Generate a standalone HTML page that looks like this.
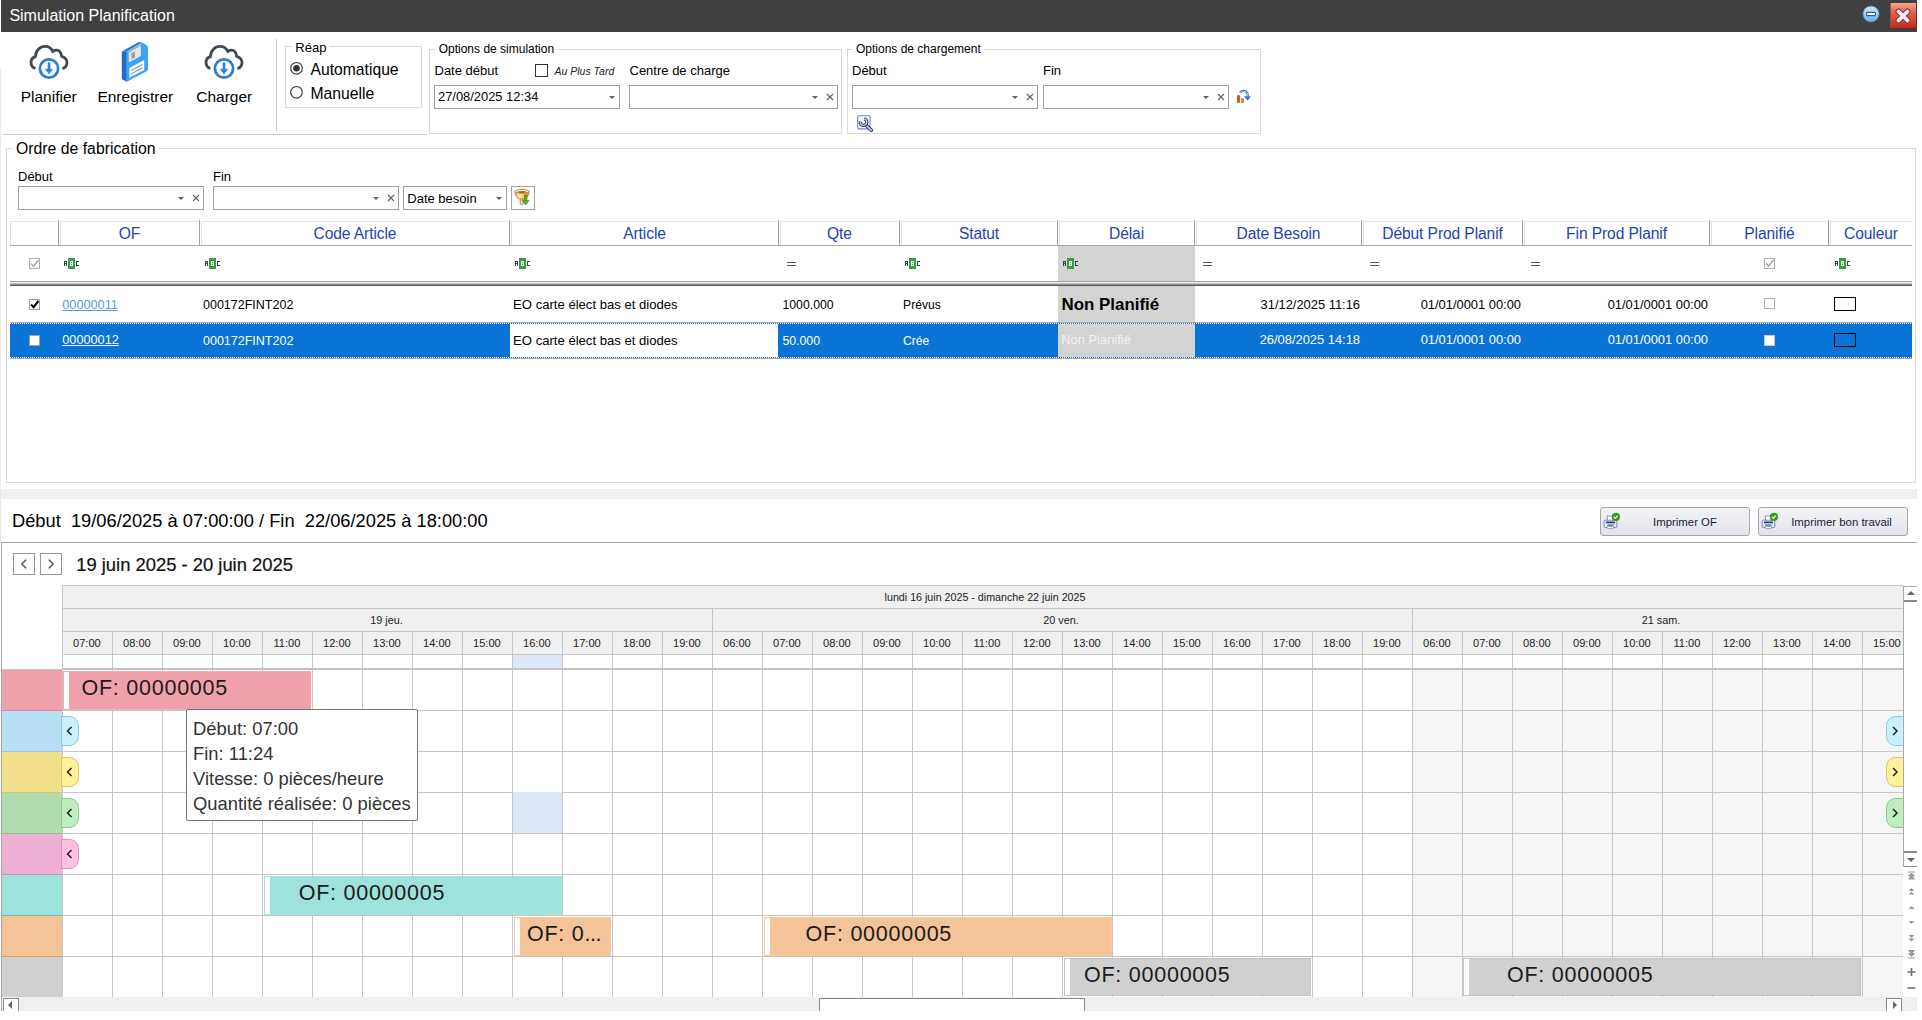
<!DOCTYPE html><html><head><meta charset="utf-8"><style>
*{box-sizing:border-box;margin:0;padding:0}
html,body{width:1922px;height:1020px;overflow:hidden;background:#fff;font-family:"Liberation Sans",sans-serif;color:#000}
.ab{position:absolute}
.t{position:absolute;white-space:nowrap;line-height:1}
</style></head><body>

<div class="ab" style="left:1px;top:0px;width:1916px;height:32px;background:#404040"></div>
<div class="t" style="left:9.40px;top:8.10px;font-size:16px;color:#fff;font-weight:normal;font-style:normal;">Simulation Planification</div>
<svg class="ab" style="left:1862px;top:5px" width="18" height="18" viewBox="0 0 18 18">
<defs><linearGradient id="mg" x1="0" y1="0" x2="0" y2="1"><stop offset="0" stop-color="#C8E8F8"/><stop offset="0.45" stop-color="#A8D4F0"/><stop offset="1" stop-color="#6AA8E0"/></linearGradient></defs>
<circle cx="9" cy="9" r="8.1" fill="url(#mg)" stroke="#3F78C8" stroke-width="0.8"/>
<rect x="4.6" y="7.3" width="8.8" height="3.4" rx="0.8" fill="#fff" stroke="#2F5BA8" stroke-width="1.2"/></svg>
<svg class="ab" style="left:1890px;top:3px" width="26" height="25" viewBox="0 0 26 25">
<defs><linearGradient id="cg" x1="0" y1="0" x2="0" y2="1"><stop offset="0" stop-color="#F4A894"/><stop offset="0.35" stop-color="#E0684E"/><stop offset="1" stop-color="#C02A1C"/></linearGradient></defs>
<rect x="0" y="0" width="26" height="25" fill="url(#cg)"/>
<rect x="0" y="0" width="1" height="25" fill="#B04040"/>
<path d="M8.5 8.5 L17.5 17.5 M17.5 8.5 L8.5 17.5" stroke="#A8302A" stroke-width="6" stroke-linecap="round"/>
<path d="M8.5 8.5 L17.5 17.5 M17.5 8.5 L8.5 17.5" stroke="#E6EEF8" stroke-width="3.8" stroke-linecap="round"/></svg>
<svg class="ab" style="left:27px;top:42px" width="44" height="40" viewBox="0 0 44 40">
<path d="M8.4 26.5 C5.5 25.5 4 23 4 20.5 C4 17.5 6 15.3 8.4 14.6 C8.7 8.5 13 4.4 18.1 4.4 C21.5 4.4 24.3 6.3 25.9 9.4 C27 8.6 28.3 8.2 29.5 8.2 C32.3 8.2 34.3 10.8 34.6 14.2 C37.5 15.2 40 17.5 40 20.6 C40 23.5 38 26 35.4 26.7" fill="none" stroke="#3C4A58" stroke-width="2.8"/>
<circle cx="22" cy="26.5" r="9.1" fill="#fff" stroke="#2A7FD0" stroke-width="2.7"/>
<path d="M22 21.5 L22 28" stroke="#2A7FD0" stroke-width="2.6" stroke-linecap="round"/>
<path d="M18.4 27.2 L25.6 27.2 L22 31.8 Z" fill="#2A7FD0" stroke="#2A7FD0" stroke-width="0.6" stroke-linejoin="round"/>
</svg>
<svg class="ab" style="left:202px;top:42px" width="44" height="40" viewBox="0 0 44 40">
<path d="M8.4 26.5 C5.5 25.5 4 23 4 20.5 C4 17.5 6 15.3 8.4 14.6 C8.7 8.5 13 4.4 18.1 4.4 C21.5 4.4 24.3 6.3 25.9 9.4 C27 8.6 28.3 8.2 29.5 8.2 C32.3 8.2 34.3 10.8 34.6 14.2 C37.5 15.2 40 17.5 40 20.6 C40 23.5 38 26 35.4 26.7" fill="none" stroke="#3C4A58" stroke-width="2.8"/>
<circle cx="22" cy="26.5" r="9.1" fill="#fff" stroke="#2A7FD0" stroke-width="2.7"/>
<path d="M22 21.5 L22 28" stroke="#2A7FD0" stroke-width="2.6" stroke-linecap="round"/>
<path d="M18.4 27.2 L25.6 27.2 L22 31.8 Z" fill="#2A7FD0" stroke="#2A7FD0" stroke-width="0.6" stroke-linejoin="round"/>
</svg>
<svg class="ab" style="left:120px;top:41px" width="30" height="42" viewBox="120 41 30 42">
<path d="M121.8 52 Q122.5 50 125 50.3 L126.8 51.5 L126.8 81.7 L122.6 79.6 Q121.8 79 121.8 78 Z" fill="#1C6CC8"/>
<path d="M121.6 51.9 L139 42.2 Q140.5 41.6 142 42.4 L146.5 45 Q148 46 148 47.5 L148 69 Q148 70.5 146.8 71.2 L126.8 81.7 L126.8 51.5 Z" fill="#3BA4F6"/>
<path d="M124 50.2 L138.5 42.2 Q139.8 41.6 141 42.3 L127 50.8 Z" fill="#1F72CC"/>
<path d="M128.7 50.7 L140.9 43.3 L140.9 55.9 L129.8 62 Q128.7 62.3 128.7 61.3 Z" fill="#E6E6E6"/>
<path d="M128.7 50.7 L140.9 43.3 L140.9 45.5 L128.7 52.9 Z" fill="#A8AEB0"/>
<path d="M131.5 53.3 L135 51.3 L135 57.2 L131.5 59.2 Z" fill="#9AA0A2"/>
<path d="M129.4 68.1 L144.2 60.1 L144.2 70 L129.4 77.8 Z" fill="#FAFCFE"/>
<path d="M131 70.8 L142.6 64.6 M131 74 L142.6 67.8" stroke="#8E9EA4" stroke-width="1.1"/>
</svg>
<div class="t" style="left:-351.30px;width:800px;text-align:center;top:89.23px;font-size:15.5px;color:#000;font-weight:normal;font-style:normal;">Planifier</div>
<div class="t" style="left:-264.70px;width:800px;text-align:center;top:89.23px;font-size:15.5px;color:#000;font-weight:normal;font-style:normal;">Enregistrer</div>
<div class="t" style="left:-175.80px;width:800px;text-align:center;top:89.23px;font-size:15.5px;color:#000;font-weight:normal;font-style:normal;">Charger</div>
<div class="ab" style="left:276px;top:39px;width:1px;height:92px;background:#C8C8C8"></div>
<div class="ab" style="left:2px;top:134px;width:425px;height:1px;background:#D0D0D0"></div>
<div class="ab" style="left:0px;top:68px;width:1px;height:474px;background:#EAEAEA"></div>
<div class="ab" style="left:285px;top:46px;width:137px;height:62px;border:1px solid #DADADA"></div>
<div class="t" style="left:292.3px;top:41.15px;font-size:13px;padding:0 3px;background:#fff">Réap</div>
<svg class="ab" style="left:289px;top:61px" width="16" height="40" viewBox="0 0 16 40">
<circle cx="7.5" cy="7.3" r="5.8" fill="#fff" stroke="#333" stroke-width="1.1"/>
<circle cx="7.5" cy="7.3" r="3.3" fill="#333"/>
<circle cx="7.5" cy="31.3" r="5.8" fill="#fff" stroke="#333" stroke-width="1.1"/>
</svg>
<div class="t" style="left:310.50px;top:61.85px;font-size:15.7px;color:#000;font-weight:normal;font-style:normal;">Automatique</div>
<div class="t" style="left:310.50px;top:85.76px;font-size:15.7px;color:#000;font-weight:normal;font-style:normal;">Manuelle</div>
<div class="ab" style="left:429px;top:49px;width:413px;height:85px;border:1px solid #DADADA"></div>
<div class="t" style="left:435.7px;top:42.80px;font-size:12px;padding:0 3px;background:#fff">Options de simulation</div>
<div class="t" style="left:434.50px;top:64.35px;font-size:13px;color:#000;font-weight:normal;font-style:normal;">Date début</div>
<div class="ab" style="left:535px;top:64px;width:13px;height:13px;border:1px solid #333;background:#fff"></div>
<div class="t" style="left:554.50px;top:66.48px;font-size:10.5px;color:#222;font-weight:normal;font-style:italic;">Au Plus Tard</div>
<div class="t" style="left:629.50px;top:64.35px;font-size:13px;color:#000;font-weight:normal;font-style:normal;">Centre de charge</div>
<div class="ab" style="left:434px;top:85px;width:186px;height:24px;border:1px solid #A0A0A0;background:#fff"></div>
<div class="t" style="left:438.00px;top:91.44px;font-size:12.9px;color:#000;font-weight:normal;font-style:normal;">27/08/2025 12:34</div>
<div class="ab" style="left:609px;top:96px;width:0;height:0;border-left:3px solid transparent;border-right:3px solid transparent;border-top:3px solid #606060"></div>
<div class="ab" style="left:629px;top:85px;width:209px;height:24px;border:1px solid #A0A0A0;background:#fff"></div>
<div class="ab" style="left:812px;top:96px;width:0;height:0;border-left:3px solid transparent;border-right:3px solid transparent;border-top:3px solid #606060"></div>
<svg class="ab" style="left:826px;top:93px" width="8" height="8" viewBox="0 0 8 8"><path d="M1 1 L7 7 M7 1 L1 7" stroke="#606060" stroke-width="1.1"/></svg>
<svg class="ab" style="left:854px;top:112px" width="22" height="22" viewBox="0 0 22 22">
<rect x="3.7" y="3.7" width="12.3" height="13.2" rx="1" fill="#F6F8FC" stroke="#7088C8" stroke-width="1.1"/>
<path d="M12 13 L17.3 18.3" stroke="#2A3560" stroke-width="3.6" stroke-linecap="round"/>
<path d="M12 13 L17.3 18.3" stroke="#BCD0EE" stroke-width="1.7" stroke-linecap="round"/>
<path d="M10.07 6.85 A3.3 3.3 0 1 1 6.25 9.53" fill="none" stroke="#2A3560" stroke-width="3.2"/>
<path d="M10.07 6.85 A3.3 3.3 0 1 1 6.25 9.53" fill="none" stroke="#C4D4F0" stroke-width="1.4"/>
</svg>
<div class="ab" style="left:847px;top:49px;width:414px;height:85px;border:1px solid #DADADA"></div>
<div class="t" style="left:853px;top:42.80px;font-size:12px;padding:0 3px;background:#fff">Options de chargement</div>
<div class="t" style="left:852.00px;top:64.35px;font-size:13px;color:#000;font-weight:normal;font-style:normal;">Début</div>
<div class="t" style="left:1043.00px;top:64.35px;font-size:13px;color:#000;font-weight:normal;font-style:normal;">Fin</div>
<div class="ab" style="left:852px;top:85px;width:186px;height:24px;border:1px solid #A0A0A0;background:#fff"></div>
<div class="ab" style="left:1012px;top:96px;width:0;height:0;border-left:3px solid transparent;border-right:3px solid transparent;border-top:3px solid #606060"></div>
<svg class="ab" style="left:1026px;top:93px" width="8" height="8" viewBox="0 0 8 8"><path d="M1 1 L7 7 M7 1 L1 7" stroke="#606060" stroke-width="1.1"/></svg>
<div class="ab" style="left:1043px;top:85px;width:186px;height:24px;border:1px solid #A0A0A0;background:#fff"></div>
<div class="ab" style="left:1203px;top:96px;width:0;height:0;border-left:3px solid transparent;border-right:3px solid transparent;border-top:3px solid #606060"></div>
<svg class="ab" style="left:1217px;top:93px" width="8" height="8" viewBox="0 0 8 8"><path d="M1 1 L7 7 M7 1 L1 7" stroke="#606060" stroke-width="1.1"/></svg>
<svg class="ab" style="left:1236px;top:89px" width="17" height="15" viewBox="1236 89 17 15">
<rect x="1237.1" y="95" width="2.8" height="8" rx="1.2" fill="#D84828"/>
<rect x="1241" y="98" width="3" height="5" rx="1.2" fill="#E08A30"/>
<path d="M1240 92.6 Q1243 89.6 1246.5 92 Q1248 93.5 1247.6 97" fill="none" stroke="#2F6CC0" stroke-width="2.2"/>
<path d="M1240 92.6 Q1243 89.6 1246.5 92 Q1248 93.5 1247.6 97" fill="none" stroke="#BEE4FA" stroke-width="0.8"/>
<path d="M1244 96.3 L1251 96.3 L1247.6 100.8 Z" fill="#3A7CCC"/>
</svg>
<div class="ab" style="left:6px;top:148px;width:1910px;height:335px;border:1px solid #DADADA"></div>
<div class="t" style="left:13px;top:140.57px;font-size:15.8px;padding:0 3px;background:#fff">Ordre de fabrication</div>
<div class="t" style="left:18.00px;top:170.35px;font-size:13px;color:#000;font-weight:normal;font-style:normal;">Début</div>
<div class="t" style="left:213.00px;top:170.35px;font-size:13px;color:#000;font-weight:normal;font-style:normal;">Fin</div>
<div class="ab" style="left:18px;top:186px;width:186px;height:24px;border:1px solid #A0A0A0;background:#fff"></div>
<div class="ab" style="left:178px;top:197px;width:0;height:0;border-left:3px solid transparent;border-right:3px solid transparent;border-top:3px solid #606060"></div>
<svg class="ab" style="left:192px;top:194px" width="8" height="8" viewBox="0 0 8 8"><path d="M1 1 L7 7 M7 1 L1 7" stroke="#606060" stroke-width="1.1"/></svg>
<div class="ab" style="left:213px;top:186px;width:186px;height:24px;border:1px solid #A0A0A0;background:#fff"></div>
<div class="ab" style="left:373px;top:197px;width:0;height:0;border-left:3px solid transparent;border-right:3px solid transparent;border-top:3px solid #606060"></div>
<svg class="ab" style="left:387px;top:194px" width="8" height="8" viewBox="0 0 8 8"><path d="M1 1 L7 7 M7 1 L1 7" stroke="#606060" stroke-width="1.1"/></svg>
<div class="ab" style="left:403px;top:186px;width:104px;height:24px;border:1px solid #A0A0A0;background:#fff"></div>
<div class="t" style="left:407.30px;top:192.15px;font-size:13px;color:#000;font-weight:normal;font-style:normal;">Date besoin</div>
<div class="ab" style="left:496px;top:197px;width:0;height:0;border-left:3px solid transparent;border-right:3px solid transparent;border-top:3px solid #606060"></div>
<div class="ab" style="left:511px;top:186px;width:24px;height:24px;border:1px solid #A0A0A0;background:#fff"></div>
<svg class="ab" style="left:511px;top:186px" width="24" height="24" viewBox="0 0 24 24">
<defs><linearGradient id="fg" x1="0" y1="0" x2="1" y2="0"><stop offset="0" stop-color="#E8A040"/><stop offset="0.3" stop-color="#FFF0C8"/><stop offset="0.7" stop-color="#F0C040"/><stop offset="1" stop-color="#D08020"/></linearGradient></defs>
<path d="M4 5.5 Q4.3 11.8 9 13.3 L13 13.3 Q17.7 11.8 18 5.5 Z" fill="url(#fg)" stroke="#C87428" stroke-width="0.9"/>
<ellipse cx="11" cy="5.4" rx="7" ry="2" fill="#FFF4E0" stroke="#C87428" stroke-width="0.9"/>
<ellipse cx="11" cy="5.9" rx="4.5" ry="1" fill="#C0602A"/>
<rect x="9.2" y="12.8" width="3" height="5.8" rx="1.3" fill="#FFE8C0" stroke="#C06420" stroke-width="0.9"/>
<rect x="13.2" y="9" width="2.8" height="6.5" fill="#58A828" stroke="#3E8A18" stroke-width="0.6"/>
<path d="M11.2 14.6 L17.9 14.6 L14.6 18.9 Z" fill="#68B030" stroke="#3E8A18" stroke-width="0.7" stroke-linejoin="round"/>
</svg>
<div class="ab" style="left:10px;top:221px;width:1902px;height:25px;background:#fff;border-top:1px solid #E2E2E2;border-bottom:1px solid #A8A8A8"></div>
<div class="ab" style="left:58px;top:220px;width:1px;height:25px;background:#A0A0A0"></div>
<div class="ab" style="left:57px;top:221px;width:1px;height:1px;background:#fff"></div>
<div class="ab" style="left:59px;top:221px;width:1px;height:1px;background:#fff"></div>
<div class="ab" style="left:60px;top:222px;width:1px;height:23px;background:#E0E0E0"></div>
<div class="ab" style="left:199px;top:220px;width:1px;height:25px;background:#A0A0A0"></div>
<div class="ab" style="left:198px;top:221px;width:1px;height:1px;background:#fff"></div>
<div class="ab" style="left:200px;top:221px;width:1px;height:1px;background:#fff"></div>
<div class="ab" style="left:201px;top:222px;width:1px;height:23px;background:#E0E0E0"></div>
<div class="ab" style="left:509px;top:220px;width:1px;height:25px;background:#A0A0A0"></div>
<div class="ab" style="left:508px;top:221px;width:1px;height:1px;background:#fff"></div>
<div class="ab" style="left:510px;top:221px;width:1px;height:1px;background:#fff"></div>
<div class="ab" style="left:511px;top:222px;width:1px;height:23px;background:#E0E0E0"></div>
<div class="ab" style="left:778px;top:220px;width:1px;height:25px;background:#A0A0A0"></div>
<div class="ab" style="left:777px;top:221px;width:1px;height:1px;background:#fff"></div>
<div class="ab" style="left:779px;top:221px;width:1px;height:1px;background:#fff"></div>
<div class="ab" style="left:780px;top:222px;width:1px;height:23px;background:#E0E0E0"></div>
<div class="ab" style="left:899px;top:220px;width:1px;height:25px;background:#A0A0A0"></div>
<div class="ab" style="left:898px;top:221px;width:1px;height:1px;background:#fff"></div>
<div class="ab" style="left:900px;top:221px;width:1px;height:1px;background:#fff"></div>
<div class="ab" style="left:901px;top:222px;width:1px;height:23px;background:#E0E0E0"></div>
<div class="ab" style="left:1057px;top:220px;width:1px;height:25px;background:#A0A0A0"></div>
<div class="ab" style="left:1056px;top:221px;width:1px;height:1px;background:#fff"></div>
<div class="ab" style="left:1058px;top:221px;width:1px;height:1px;background:#fff"></div>
<div class="ab" style="left:1059px;top:222px;width:1px;height:23px;background:#E0E0E0"></div>
<div class="ab" style="left:1194px;top:220px;width:1px;height:25px;background:#A0A0A0"></div>
<div class="ab" style="left:1193px;top:221px;width:1px;height:1px;background:#fff"></div>
<div class="ab" style="left:1195px;top:221px;width:1px;height:1px;background:#fff"></div>
<div class="ab" style="left:1196px;top:222px;width:1px;height:23px;background:#E0E0E0"></div>
<div class="ab" style="left:1361px;top:220px;width:1px;height:25px;background:#A0A0A0"></div>
<div class="ab" style="left:1360px;top:221px;width:1px;height:1px;background:#fff"></div>
<div class="ab" style="left:1362px;top:221px;width:1px;height:1px;background:#fff"></div>
<div class="ab" style="left:1363px;top:222px;width:1px;height:23px;background:#E0E0E0"></div>
<div class="ab" style="left:1522px;top:220px;width:1px;height:25px;background:#A0A0A0"></div>
<div class="ab" style="left:1521px;top:221px;width:1px;height:1px;background:#fff"></div>
<div class="ab" style="left:1523px;top:221px;width:1px;height:1px;background:#fff"></div>
<div class="ab" style="left:1524px;top:222px;width:1px;height:23px;background:#E0E0E0"></div>
<div class="ab" style="left:1709px;top:220px;width:1px;height:25px;background:#A0A0A0"></div>
<div class="ab" style="left:1708px;top:221px;width:1px;height:1px;background:#fff"></div>
<div class="ab" style="left:1710px;top:221px;width:1px;height:1px;background:#fff"></div>
<div class="ab" style="left:1711px;top:222px;width:1px;height:23px;background:#E0E0E0"></div>
<div class="ab" style="left:1828px;top:220px;width:1px;height:25px;background:#A0A0A0"></div>
<div class="ab" style="left:1827px;top:221px;width:1px;height:1px;background:#fff"></div>
<div class="ab" style="left:1829px;top:221px;width:1px;height:1px;background:#fff"></div>
<div class="ab" style="left:1830px;top:222px;width:1px;height:23px;background:#E0E0E0"></div>
<div class="ab" style="left:10px;top:221px;width:1px;height:24px;background:#E2E2E2"></div>
<div class="t" style="left:-270.50px;width:800px;text-align:center;top:226.04px;font-size:15.6px;color:#2444B2;font-weight:normal;font-style:normal;letter-spacing:-0.1px">OF</div>
<div class="t" style="left:-45.00px;width:800px;text-align:center;top:226.04px;font-size:15.6px;color:#2444B2;font-weight:normal;font-style:normal;letter-spacing:-0.1px">Code Article</div>
<div class="t" style="left:244.50px;width:800px;text-align:center;top:226.04px;font-size:15.6px;color:#2444B2;font-weight:normal;font-style:normal;letter-spacing:-0.1px">Article</div>
<div class="t" style="left:439.50px;width:800px;text-align:center;top:226.04px;font-size:15.6px;color:#2444B2;font-weight:normal;font-style:normal;letter-spacing:-0.1px">Qte</div>
<div class="t" style="left:579.00px;width:800px;text-align:center;top:226.04px;font-size:15.6px;color:#2444B2;font-weight:normal;font-style:normal;letter-spacing:-0.1px">Statut</div>
<div class="t" style="left:726.50px;width:800px;text-align:center;top:226.04px;font-size:15.6px;color:#2444B2;font-weight:normal;font-style:normal;letter-spacing:-0.1px">Délai</div>
<div class="t" style="left:878.50px;width:800px;text-align:center;top:226.04px;font-size:15.6px;color:#2444B2;font-weight:normal;font-style:normal;letter-spacing:-0.1px">Date Besoin</div>
<div class="t" style="left:1042.50px;width:800px;text-align:center;top:226.04px;font-size:15.6px;color:#2444B2;font-weight:normal;font-style:normal;letter-spacing:-0.1px">Début Prod Planif</div>
<div class="t" style="left:1216.50px;width:800px;text-align:center;top:226.04px;font-size:15.6px;color:#2444B2;font-weight:normal;font-style:normal;letter-spacing:-0.1px">Fin Prod Planif</div>
<div class="t" style="left:1369.50px;width:800px;text-align:center;top:226.04px;font-size:15.6px;color:#2444B2;font-weight:normal;font-style:normal;letter-spacing:-0.1px">Planifié</div>
<div class="t" style="left:1471.00px;width:800px;text-align:center;top:226.04px;font-size:15.6px;color:#2444B2;font-weight:normal;font-style:normal;letter-spacing:-0.1px">Couleur</div>
<div class="ab" style="left:1058px;top:246px;width:137px;height:112px;background:#D3D3D3"></div>
<div class="ab" style="left:10px;top:281px;width:1902px;height:1px;background:#A0A0A0"></div>
<div class="ab" style="left:10px;top:282px;width:1902px;height:1px;background:#EEEEEE"></div>
<div class="ab" style="left:10px;top:283px;width:1902px;height:1px;background:#C4C4C4"></div>
<div class="ab" style="left:10px;top:284px;width:1902px;height:1px;background:#8C8C8C"></div>
<div class="ab" style="left:10px;top:285px;width:1902px;height:1px;background:#5C5C5C"></div>
<div class="ab" style="left:29px;top:258px;width:11px;height:11px;border:1px solid #B0B0B0;background:#fff"></div>
<svg class="ab" style="left:29px;top:258px" width="11" height="11" viewBox="0 0 11 11"><path d="M2 5.5 L4.5 8.2 L9.5 2" fill="none" stroke="#A0A0A0" stroke-width="1.3"/></svg>
<svg class="ab" style="left:64px;top:258px" width="16" height="11" viewBox="0 0 16 11" shape-rendering="crispEdges"><rect x="0" y="3" width="3" height="1" fill="#3A3E4A"/><rect x="0" y="4" width="1" height="1" fill="#3A3E4A"/><rect x="2" y="4" width="1" height="1" fill="#3A3E4A"/><rect x="0" y="5" width="3" height="1" fill="#3A3E4A"/><rect x="0" y="6" width="1" height="1" fill="#3A3E4A"/><rect x="2" y="6" width="1" height="1" fill="#3A3E4A"/><rect x="0" y="7" width="1" height="1" fill="#3A3E4A"/><rect x="2" y="7" width="1" height="1" fill="#3A3E4A"/><rect x="4" y="0" width="7" height="11" fill="#34A040"/><rect x="6" y="3" width="3" height="5" fill="#fff"/><rect x="7" y="4" width="1" height="1" fill="#34A040"/><rect x="7" y="6" width="1" height="1" fill="#34A040"/><rect x="12" y="3" width="3" height="1" fill="#3A3E4A"/><rect x="12" y="4" width="1" height="3" fill="#3A3E4A"/><rect x="12" y="7" width="3" height="1" fill="#3A3E4A"/></svg>
<svg class="ab" style="left:205px;top:258px" width="16" height="11" viewBox="0 0 16 11" shape-rendering="crispEdges"><rect x="0" y="3" width="3" height="1" fill="#3A3E4A"/><rect x="0" y="4" width="1" height="1" fill="#3A3E4A"/><rect x="2" y="4" width="1" height="1" fill="#3A3E4A"/><rect x="0" y="5" width="3" height="1" fill="#3A3E4A"/><rect x="0" y="6" width="1" height="1" fill="#3A3E4A"/><rect x="2" y="6" width="1" height="1" fill="#3A3E4A"/><rect x="0" y="7" width="1" height="1" fill="#3A3E4A"/><rect x="2" y="7" width="1" height="1" fill="#3A3E4A"/><rect x="4" y="0" width="7" height="11" fill="#34A040"/><rect x="6" y="3" width="3" height="5" fill="#fff"/><rect x="7" y="4" width="1" height="1" fill="#34A040"/><rect x="7" y="6" width="1" height="1" fill="#34A040"/><rect x="12" y="3" width="3" height="1" fill="#3A3E4A"/><rect x="12" y="4" width="1" height="3" fill="#3A3E4A"/><rect x="12" y="7" width="3" height="1" fill="#3A3E4A"/></svg>
<svg class="ab" style="left:515px;top:258px" width="16" height="11" viewBox="0 0 16 11" shape-rendering="crispEdges"><rect x="0" y="3" width="3" height="1" fill="#3A3E4A"/><rect x="0" y="4" width="1" height="1" fill="#3A3E4A"/><rect x="2" y="4" width="1" height="1" fill="#3A3E4A"/><rect x="0" y="5" width="3" height="1" fill="#3A3E4A"/><rect x="0" y="6" width="1" height="1" fill="#3A3E4A"/><rect x="2" y="6" width="1" height="1" fill="#3A3E4A"/><rect x="0" y="7" width="1" height="1" fill="#3A3E4A"/><rect x="2" y="7" width="1" height="1" fill="#3A3E4A"/><rect x="4" y="0" width="7" height="11" fill="#34A040"/><rect x="6" y="3" width="3" height="5" fill="#fff"/><rect x="7" y="4" width="1" height="1" fill="#34A040"/><rect x="7" y="6" width="1" height="1" fill="#34A040"/><rect x="12" y="3" width="3" height="1" fill="#3A3E4A"/><rect x="12" y="4" width="1" height="3" fill="#3A3E4A"/><rect x="12" y="7" width="3" height="1" fill="#3A3E4A"/></svg>
<div class="ab" style="left:787px;top:262px;width:9px;height:1px;background:#555"></div>
<div class="ab" style="left:787px;top:265px;width:9px;height:1px;background:#555"></div>
<svg class="ab" style="left:905px;top:258px" width="16" height="11" viewBox="0 0 16 11" shape-rendering="crispEdges"><rect x="0" y="3" width="3" height="1" fill="#3A3E4A"/><rect x="0" y="4" width="1" height="1" fill="#3A3E4A"/><rect x="2" y="4" width="1" height="1" fill="#3A3E4A"/><rect x="0" y="5" width="3" height="1" fill="#3A3E4A"/><rect x="0" y="6" width="1" height="1" fill="#3A3E4A"/><rect x="2" y="6" width="1" height="1" fill="#3A3E4A"/><rect x="0" y="7" width="1" height="1" fill="#3A3E4A"/><rect x="2" y="7" width="1" height="1" fill="#3A3E4A"/><rect x="4" y="0" width="7" height="11" fill="#34A040"/><rect x="6" y="3" width="3" height="5" fill="#fff"/><rect x="7" y="4" width="1" height="1" fill="#34A040"/><rect x="7" y="6" width="1" height="1" fill="#34A040"/><rect x="12" y="3" width="3" height="1" fill="#3A3E4A"/><rect x="12" y="4" width="1" height="3" fill="#3A3E4A"/><rect x="12" y="7" width="3" height="1" fill="#3A3E4A"/></svg>
<svg class="ab" style="left:1063px;top:258px" width="16" height="11" viewBox="0 0 16 11" shape-rendering="crispEdges"><rect x="0" y="3" width="3" height="1" fill="#3A3E4A"/><rect x="0" y="4" width="1" height="1" fill="#3A3E4A"/><rect x="2" y="4" width="1" height="1" fill="#3A3E4A"/><rect x="0" y="5" width="3" height="1" fill="#3A3E4A"/><rect x="0" y="6" width="1" height="1" fill="#3A3E4A"/><rect x="2" y="6" width="1" height="1" fill="#3A3E4A"/><rect x="0" y="7" width="1" height="1" fill="#3A3E4A"/><rect x="2" y="7" width="1" height="1" fill="#3A3E4A"/><rect x="4" y="0" width="7" height="11" fill="#34A040"/><rect x="6" y="3" width="3" height="5" fill="#fff"/><rect x="7" y="4" width="1" height="1" fill="#34A040"/><rect x="7" y="6" width="1" height="1" fill="#34A040"/><rect x="12" y="3" width="3" height="1" fill="#3A3E4A"/><rect x="12" y="4" width="1" height="3" fill="#3A3E4A"/><rect x="12" y="7" width="3" height="1" fill="#3A3E4A"/></svg>
<div class="ab" style="left:1203px;top:262px;width:9px;height:1px;background:#555"></div>
<div class="ab" style="left:1203px;top:265px;width:9px;height:1px;background:#555"></div>
<div class="ab" style="left:1370px;top:262px;width:9px;height:1px;background:#555"></div>
<div class="ab" style="left:1370px;top:265px;width:9px;height:1px;background:#555"></div>
<div class="ab" style="left:1531px;top:262px;width:9px;height:1px;background:#555"></div>
<div class="ab" style="left:1531px;top:265px;width:9px;height:1px;background:#555"></div>
<div class="ab" style="left:1764px;top:258px;width:11px;height:11px;border:1px solid #B0B0B0;background:#fff"></div>
<svg class="ab" style="left:1764px;top:258px" width="11" height="11" viewBox="0 0 11 11"><path d="M2 5.5 L4.5 8.2 L9.5 2" fill="none" stroke="#A0A0A0" stroke-width="1.3"/></svg>
<svg class="ab" style="left:1835px;top:258px" width="16" height="11" viewBox="0 0 16 11" shape-rendering="crispEdges"><rect x="0" y="3" width="3" height="1" fill="#3A3E4A"/><rect x="0" y="4" width="1" height="1" fill="#3A3E4A"/><rect x="2" y="4" width="1" height="1" fill="#3A3E4A"/><rect x="0" y="5" width="3" height="1" fill="#3A3E4A"/><rect x="0" y="6" width="1" height="1" fill="#3A3E4A"/><rect x="2" y="6" width="1" height="1" fill="#3A3E4A"/><rect x="0" y="7" width="1" height="1" fill="#3A3E4A"/><rect x="2" y="7" width="1" height="1" fill="#3A3E4A"/><rect x="4" y="0" width="7" height="11" fill="#34A040"/><rect x="6" y="3" width="3" height="5" fill="#fff"/><rect x="7" y="4" width="1" height="1" fill="#34A040"/><rect x="7" y="6" width="1" height="1" fill="#34A040"/><rect x="12" y="3" width="3" height="1" fill="#3A3E4A"/><rect x="12" y="4" width="1" height="3" fill="#3A3E4A"/><rect x="12" y="7" width="3" height="1" fill="#3A3E4A"/></svg>
<div class="ab" style="left:29px;top:299px;width:11px;height:11px;border:1px solid #A0A0A0;background:#fff"></div>
<svg class="ab" style="left:29px;top:299px" width="11" height="11" viewBox="0 0 11 11"><path d="M2 5.5 L4.5 8.2 L9.5 2" fill="none" stroke="#000" stroke-width="2"/></svg>
<div class="t" style="left:62.30px;top:298.80px;font-size:12.7px;color:#5A9AE0;font-weight:normal;font-style:normal;"><u>00000011</u></div>
<div class="t" style="left:203.00px;top:298.97px;font-size:12.5px;color:#000;font-weight:normal;font-style:normal;">000172FINT202</div>
<div class="t" style="left:513.10px;top:298.46px;font-size:13.1px;color:#000;font-weight:normal;font-style:normal;">EO carte élect bas et diodes</div>
<div class="t" style="left:782.40px;top:299.14px;font-size:12.3px;color:#000;font-weight:normal;font-style:normal;">1000.000</div>
<div class="t" style="left:903.10px;top:299.31px;font-size:12.1px;color:#000;font-weight:normal;font-style:normal;">Prévus</div>
<div class="t" style="left:1061.50px;top:296.73px;font-size:16.9px;color:#000;font-weight:bold;font-style:normal;">Non Planifié</div>
<div class="t" style="left:560.00px;width:800px;text-align:right;top:298.63px;font-size:12.9px;color:#000;font-weight:normal;font-style:normal;">31/12/2025 11:16</div>
<div class="t" style="left:721.00px;width:800px;text-align:right;top:298.63px;font-size:12.9px;color:#000;font-weight:normal;font-style:normal;">01/01/0001 00:00</div>
<div class="t" style="left:908.00px;width:800px;text-align:right;top:298.63px;font-size:12.9px;color:#000;font-weight:normal;font-style:normal;">01/01/0001 00:00</div>
<div class="ab" style="left:1764px;top:298px;width:11px;height:11px;border:1px solid #B0B0B0;background:#fff"></div>
<div class="ab" style="left:1834px;top:297px;width:22px;height:14px;border:1px solid #000;background:#fff"></div>
<div class="ab" style="left:10px;top:322px;width:1902px;height:1px;background:#A8A8A8"></div>
<div class="ab" style="left:10px;top:358px;width:1902px;height:1px;background:#A8A8A8"></div>
<div class="ab" style="left:10px;top:323px;width:1902px;height:35px;background:#0A74D6"></div>
<div class="ab" style="left:510px;top:323px;width:268px;height:35px;background:#fff"></div>
<div class="ab" style="left:1058px;top:323px;width:137px;height:35px;background:#D3D3D3"></div>
<div class="ab" style="left:10px;top:323px;width:1902px;height:1px;background:repeating-linear-gradient(90deg,#fff 0 1px,transparent 1px 2px)"></div>
<div class="ab" style="left:10px;top:357px;width:1902px;height:1px;background:repeating-linear-gradient(90deg,#fff 0 1px,transparent 1px 2px)"></div>
<div class="ab" style="left:510px;top:323px;width:268px;height:1px;background:repeating-linear-gradient(90deg,#fff 0 1px,#0A74D6 1px 2px)"></div>
<div class="ab" style="left:510px;top:357px;width:268px;height:1px;background:repeating-linear-gradient(90deg,#fff 0 1px,#0A74D6 1px 2px)"></div>
<div class="ab" style="left:1058px;top:323px;width:137px;height:1px;background:repeating-linear-gradient(90deg,#fff 0 1px,#0A74D6 1px 2px)"></div>
<div class="ab" style="left:1058px;top:357px;width:137px;height:1px;background:repeating-linear-gradient(90deg,#fff 0 1px,#0A74D6 1px 2px)"></div>
<div class="ab" style="left:29px;top:335px;width:11px;height:11px;border:1px solid #A0A0A0;background:#fff"></div>
<div class="t" style="left:62.30px;top:334.40px;font-size:12.7px;color:#fff;font-weight:normal;font-style:normal;"><u>00000012</u></div>
<div class="t" style="left:203.00px;top:334.57px;font-size:12.5px;color:#fff;font-weight:normal;font-style:normal;">000172FINT202</div>
<div class="t" style="left:513.10px;top:334.06px;font-size:13.1px;color:#000;font-weight:normal;font-style:normal;">EO carte élect bas et diodes</div>
<div class="t" style="left:782.40px;top:334.75px;font-size:12.3px;color:#fff;font-weight:normal;font-style:normal;">50.000</div>
<div class="t" style="left:903.10px;top:334.91px;font-size:12.1px;color:#fff;font-weight:normal;font-style:normal;">Crée</div>
<div class="t" style="left:1061.30px;top:334.24px;font-size:12.9px;color:#F4F4F4;font-weight:normal;font-style:normal;">Non Planifié</div>
<div class="t" style="left:560.00px;width:800px;text-align:right;top:334.24px;font-size:12.9px;color:#fff;font-weight:normal;font-style:normal;">26/08/2025 14:18</div>
<div class="t" style="left:721.00px;width:800px;text-align:right;top:334.24px;font-size:12.9px;color:#fff;font-weight:normal;font-style:normal;">01/01/0001 00:00</div>
<div class="t" style="left:908.00px;width:800px;text-align:right;top:334.24px;font-size:12.9px;color:#fff;font-weight:normal;font-style:normal;">01/01/0001 00:00</div>
<div class="ab" style="left:1764px;top:335px;width:11px;height:11px;background:#fff;border:1px solid #ccc"></div>
<div class="ab" style="left:1834px;top:333px;width:22px;height:14px;border:1px solid #000"></div>
<div class="ab" style="left:1px;top:489px;width:1916px;height:10px;background:#EFEFEF"></div>
<div class="t" style="left:12.00px;top:511.84px;font-size:18.3px;color:#000;font-weight:normal;font-style:normal;">Début&nbsp; 19/06/2025 à 07:00:00 / Fin&nbsp; 22/06/2025 à 18:00:00</div>
<div class="ab" style="left:1600px;top:507px;width:150px;height:29px;border:1px solid #A4A8B0;border-radius:3px;background:linear-gradient(#F2F3F6,#E2E4EA)"></div>
<svg class="ab" style="left:1603px;top:512px" width="20" height="20" viewBox="0 0 20 20">
<rect x="4.3" y="4" width="5.8" height="6" fill="#fff" stroke="#7A90C8" stroke-width="0.9"/>
<rect x="1.1" y="8.2" width="12.7" height="7.4" rx="1" fill="#E4EEF8" stroke="#6A80C0" stroke-width="0.9"/>
<rect x="3" y="9.6" width="9" height="1.7" rx="0.6" fill="#2A3A6A"/>
<rect x="4.3" y="12.6" width="6.2" height="1.2" fill="#2A3A6A"/>
<rect x="4.3" y="13.8" width="6.2" height="2.8" rx="0.8" fill="#fff" stroke="#7A90C8" stroke-width="0.8"/>
<rect x="5.5" y="14" width="3.8" height="0.8" fill="#3A9AE0"/>
<circle cx="12.9" cy="4.9" r="4.1" fill="#3C9A1A"/>
<path d="M10.9 4.9 L12.3 6.3 L14.8 3.6" fill="none" stroke="#fff" stroke-width="1.1"/>
</svg>
<div class="t" style="left:1653.00px;top:516.81px;font-size:11.4px;color:#1A1A3A;font-weight:normal;font-style:normal;">Imprimer OF</div>
<div class="ab" style="left:1758px;top:507px;width:150px;height:29px;border:1px solid #A4A8B0;border-radius:3px;background:linear-gradient(#F2F3F6,#E2E4EA)"></div>
<svg class="ab" style="left:1761px;top:512px" width="20" height="20" viewBox="0 0 20 20">
<rect x="4.3" y="4" width="5.8" height="6" fill="#fff" stroke="#7A90C8" stroke-width="0.9"/>
<rect x="1.1" y="8.2" width="12.7" height="7.4" rx="1" fill="#E4EEF8" stroke="#6A80C0" stroke-width="0.9"/>
<rect x="3" y="9.6" width="9" height="1.7" rx="0.6" fill="#2A3A6A"/>
<rect x="4.3" y="12.6" width="6.2" height="1.2" fill="#2A3A6A"/>
<rect x="4.3" y="13.8" width="6.2" height="2.8" rx="0.8" fill="#fff" stroke="#7A90C8" stroke-width="0.8"/>
<rect x="5.5" y="14" width="3.8" height="0.8" fill="#3A9AE0"/>
<circle cx="12.9" cy="4.9" r="4.1" fill="#3C9A1A"/>
<path d="M10.9 4.9 L12.3 6.3 L14.8 3.6" fill="none" stroke="#fff" stroke-width="1.1"/>
</svg>
<div class="t" style="left:1791.20px;top:516.81px;font-size:11.4px;color:#1A1A3A;font-weight:normal;font-style:normal;">Imprimer bon travail</div>
<div class="ab" style="left:1px;top:542px;width:1916px;height:1px;background:#A8A8A8"></div>
<div class="ab" style="left:1px;top:542px;width:1px;height:469px;background:#A8A8A8"></div>
<div class="ab" style="left:13px;top:553px;width:22px;height:22px;border:1px solid #9A9A9A;background:#fff"></div>
<svg class="ab" style="left:13px;top:553px" width="22" height="22" viewBox="0 0 22 22"><path d="M13.2 6.6 L8.8 11 L13.2 15.4" fill="none" stroke="#5A5E6A" stroke-width="1.5"/></svg>
<div class="ab" style="left:40px;top:553px;width:22px;height:22px;border:1px solid #9A9A9A;background:#fff"></div>
<svg class="ab" style="left:40px;top:553px" width="22" height="22" viewBox="0 0 22 22"><path d="M8.8 6.6 L13.2 11 L8.8 15.4" fill="none" stroke="#5A5E6A" stroke-width="1.5"/></svg>
<div class="t" style="left:76.20px;top:556.16px;font-size:18.4px;color:#111;font-weight:normal;font-style:normal;-webkit-text-stroke:0.2px #111">19 juin 2025 - 20 juin 2025</div>
<div class="ab" style="left:62px;top:585px;width:1841px;height:83px;background:#F0F0F0"></div>
<div class="ab" style="left:62px;top:585px;width:1841px;height:1px;background:#C6C6C6"></div>
<div class="ab" style="left:62px;top:585px;width:1px;height:83px;background:#C6C6C6"></div>
<div class="ab" style="left:62px;top:608px;width:1841px;height:1px;background:#C6C6C6"></div>
<div class="ab" style="left:62px;top:631px;width:1841px;height:1px;background:#C6C6C6"></div>
<div class="ab" style="left:62px;top:654px;width:1841px;height:1px;background:#C6C6C6"></div>
<div class="ab" style="left:63px;top:655px;width:1840px;height:13px;background:#fff"></div>
<div class="ab" style="left:513px;top:655px;width:49px;height:13px;background:#DCE8F8"></div>
<div class="ab" style="left:62px;top:668px;width:1841px;height:2px;background:#C2C2C2"></div>
<div class="t" style="left:585.00px;width:800px;text-align:center;top:592.30px;font-size:10.7px;color:#222;font-weight:normal;font-style:normal;">lundi 16 juin 2025 - dimanche 22 juin 2025</div>
<div class="ab" style="left:712px;top:609px;width:1px;height:59px;background:#C6C6C6"></div>
<div class="ab" style="left:1412px;top:609px;width:1px;height:59px;background:#C6C6C6"></div>
<div class="t" style="left:-13.50px;width:800px;text-align:center;top:615.12px;font-size:10.8px;color:#222;font-weight:normal;font-style:normal;">19 jeu.</div>
<div class="t" style="left:661.00px;width:800px;text-align:center;top:615.12px;font-size:10.8px;color:#222;font-weight:normal;font-style:normal;">20 ven.</div>
<div class="t" style="left:1261.00px;width:800px;text-align:center;top:615.12px;font-size:10.8px;color:#222;font-weight:normal;font-style:normal;">21 sam.</div>
<div class="t" style="left:-313.10px;width:800px;text-align:center;top:638.17px;font-size:11.1px;color:#222;font-weight:normal;font-style:normal;">07:00</div>
<div class="ab" style="left:112px;top:632px;width:1px;height:36px;background:#C6C6C6"></div>
<div class="t" style="left:-263.10px;width:800px;text-align:center;top:638.17px;font-size:11.1px;color:#222;font-weight:normal;font-style:normal;">08:00</div>
<div class="ab" style="left:162px;top:632px;width:1px;height:36px;background:#C6C6C6"></div>
<div class="t" style="left:-213.10px;width:800px;text-align:center;top:638.17px;font-size:11.1px;color:#222;font-weight:normal;font-style:normal;">09:00</div>
<div class="ab" style="left:212px;top:632px;width:1px;height:36px;background:#C6C6C6"></div>
<div class="t" style="left:-163.10px;width:800px;text-align:center;top:638.17px;font-size:11.1px;color:#222;font-weight:normal;font-style:normal;">10:00</div>
<div class="ab" style="left:262px;top:632px;width:1px;height:36px;background:#C6C6C6"></div>
<div class="t" style="left:-113.10px;width:800px;text-align:center;top:638.17px;font-size:11.1px;color:#222;font-weight:normal;font-style:normal;">11:00</div>
<div class="ab" style="left:312px;top:632px;width:1px;height:36px;background:#C6C6C6"></div>
<div class="t" style="left:-63.10px;width:800px;text-align:center;top:638.17px;font-size:11.1px;color:#222;font-weight:normal;font-style:normal;">12:00</div>
<div class="ab" style="left:362px;top:632px;width:1px;height:36px;background:#C6C6C6"></div>
<div class="t" style="left:-13.10px;width:800px;text-align:center;top:638.17px;font-size:11.1px;color:#222;font-weight:normal;font-style:normal;">13:00</div>
<div class="ab" style="left:412px;top:632px;width:1px;height:36px;background:#C6C6C6"></div>
<div class="t" style="left:36.90px;width:800px;text-align:center;top:638.17px;font-size:11.1px;color:#222;font-weight:normal;font-style:normal;">14:00</div>
<div class="ab" style="left:462px;top:632px;width:1px;height:36px;background:#C6C6C6"></div>
<div class="t" style="left:86.90px;width:800px;text-align:center;top:638.17px;font-size:11.1px;color:#222;font-weight:normal;font-style:normal;">15:00</div>
<div class="ab" style="left:512px;top:632px;width:1px;height:36px;background:#C6C6C6"></div>
<div class="t" style="left:136.90px;width:800px;text-align:center;top:638.17px;font-size:11.1px;color:#222;font-weight:normal;font-style:normal;">16:00</div>
<div class="ab" style="left:562px;top:632px;width:1px;height:36px;background:#C6C6C6"></div>
<div class="t" style="left:186.90px;width:800px;text-align:center;top:638.17px;font-size:11.1px;color:#222;font-weight:normal;font-style:normal;">17:00</div>
<div class="ab" style="left:612px;top:632px;width:1px;height:36px;background:#C6C6C6"></div>
<div class="t" style="left:236.90px;width:800px;text-align:center;top:638.17px;font-size:11.1px;color:#222;font-weight:normal;font-style:normal;">18:00</div>
<div class="ab" style="left:662px;top:632px;width:1px;height:36px;background:#C6C6C6"></div>
<div class="t" style="left:286.90px;width:800px;text-align:center;top:638.17px;font-size:11.1px;color:#222;font-weight:normal;font-style:normal;">19:00</div>
<div class="ab" style="left:712px;top:632px;width:1px;height:36px;background:#C6C6C6"></div>
<div class="t" style="left:336.90px;width:800px;text-align:center;top:638.17px;font-size:11.1px;color:#222;font-weight:normal;font-style:normal;">06:00</div>
<div class="ab" style="left:762px;top:632px;width:1px;height:36px;background:#C6C6C6"></div>
<div class="t" style="left:386.90px;width:800px;text-align:center;top:638.17px;font-size:11.1px;color:#222;font-weight:normal;font-style:normal;">07:00</div>
<div class="ab" style="left:812px;top:632px;width:1px;height:36px;background:#C6C6C6"></div>
<div class="t" style="left:436.90px;width:800px;text-align:center;top:638.17px;font-size:11.1px;color:#222;font-weight:normal;font-style:normal;">08:00</div>
<div class="ab" style="left:862px;top:632px;width:1px;height:36px;background:#C6C6C6"></div>
<div class="t" style="left:486.90px;width:800px;text-align:center;top:638.17px;font-size:11.1px;color:#222;font-weight:normal;font-style:normal;">09:00</div>
<div class="ab" style="left:912px;top:632px;width:1px;height:36px;background:#C6C6C6"></div>
<div class="t" style="left:536.90px;width:800px;text-align:center;top:638.17px;font-size:11.1px;color:#222;font-weight:normal;font-style:normal;">10:00</div>
<div class="ab" style="left:962px;top:632px;width:1px;height:36px;background:#C6C6C6"></div>
<div class="t" style="left:586.90px;width:800px;text-align:center;top:638.17px;font-size:11.1px;color:#222;font-weight:normal;font-style:normal;">11:00</div>
<div class="ab" style="left:1012px;top:632px;width:1px;height:36px;background:#C6C6C6"></div>
<div class="t" style="left:636.90px;width:800px;text-align:center;top:638.17px;font-size:11.1px;color:#222;font-weight:normal;font-style:normal;">12:00</div>
<div class="ab" style="left:1062px;top:632px;width:1px;height:36px;background:#C6C6C6"></div>
<div class="t" style="left:686.90px;width:800px;text-align:center;top:638.17px;font-size:11.1px;color:#222;font-weight:normal;font-style:normal;">13:00</div>
<div class="ab" style="left:1112px;top:632px;width:1px;height:36px;background:#C6C6C6"></div>
<div class="t" style="left:736.90px;width:800px;text-align:center;top:638.17px;font-size:11.1px;color:#222;font-weight:normal;font-style:normal;">14:00</div>
<div class="ab" style="left:1162px;top:632px;width:1px;height:36px;background:#C6C6C6"></div>
<div class="t" style="left:786.90px;width:800px;text-align:center;top:638.17px;font-size:11.1px;color:#222;font-weight:normal;font-style:normal;">15:00</div>
<div class="ab" style="left:1212px;top:632px;width:1px;height:36px;background:#C6C6C6"></div>
<div class="t" style="left:836.90px;width:800px;text-align:center;top:638.17px;font-size:11.1px;color:#222;font-weight:normal;font-style:normal;">16:00</div>
<div class="ab" style="left:1262px;top:632px;width:1px;height:36px;background:#C6C6C6"></div>
<div class="t" style="left:886.90px;width:800px;text-align:center;top:638.17px;font-size:11.1px;color:#222;font-weight:normal;font-style:normal;">17:00</div>
<div class="ab" style="left:1312px;top:632px;width:1px;height:36px;background:#C6C6C6"></div>
<div class="t" style="left:936.90px;width:800px;text-align:center;top:638.17px;font-size:11.1px;color:#222;font-weight:normal;font-style:normal;">18:00</div>
<div class="ab" style="left:1362px;top:632px;width:1px;height:36px;background:#C6C6C6"></div>
<div class="t" style="left:986.90px;width:800px;text-align:center;top:638.17px;font-size:11.1px;color:#222;font-weight:normal;font-style:normal;">19:00</div>
<div class="ab" style="left:1412px;top:632px;width:1px;height:36px;background:#C6C6C6"></div>
<div class="t" style="left:1036.90px;width:800px;text-align:center;top:638.17px;font-size:11.1px;color:#222;font-weight:normal;font-style:normal;">06:00</div>
<div class="ab" style="left:1462px;top:632px;width:1px;height:36px;background:#C6C6C6"></div>
<div class="t" style="left:1086.90px;width:800px;text-align:center;top:638.17px;font-size:11.1px;color:#222;font-weight:normal;font-style:normal;">07:00</div>
<div class="ab" style="left:1512px;top:632px;width:1px;height:36px;background:#C6C6C6"></div>
<div class="t" style="left:1136.90px;width:800px;text-align:center;top:638.17px;font-size:11.1px;color:#222;font-weight:normal;font-style:normal;">08:00</div>
<div class="ab" style="left:1562px;top:632px;width:1px;height:36px;background:#C6C6C6"></div>
<div class="t" style="left:1186.90px;width:800px;text-align:center;top:638.17px;font-size:11.1px;color:#222;font-weight:normal;font-style:normal;">09:00</div>
<div class="ab" style="left:1612px;top:632px;width:1px;height:36px;background:#C6C6C6"></div>
<div class="t" style="left:1236.90px;width:800px;text-align:center;top:638.17px;font-size:11.1px;color:#222;font-weight:normal;font-style:normal;">10:00</div>
<div class="ab" style="left:1662px;top:632px;width:1px;height:36px;background:#C6C6C6"></div>
<div class="t" style="left:1286.90px;width:800px;text-align:center;top:638.17px;font-size:11.1px;color:#222;font-weight:normal;font-style:normal;">11:00</div>
<div class="ab" style="left:1712px;top:632px;width:1px;height:36px;background:#C6C6C6"></div>
<div class="t" style="left:1336.90px;width:800px;text-align:center;top:638.17px;font-size:11.1px;color:#222;font-weight:normal;font-style:normal;">12:00</div>
<div class="ab" style="left:1762px;top:632px;width:1px;height:36px;background:#C6C6C6"></div>
<div class="t" style="left:1386.90px;width:800px;text-align:center;top:638.17px;font-size:11.1px;color:#222;font-weight:normal;font-style:normal;">13:00</div>
<div class="ab" style="left:1812px;top:632px;width:1px;height:36px;background:#C6C6C6"></div>
<div class="t" style="left:1436.90px;width:800px;text-align:center;top:638.17px;font-size:11.1px;color:#222;font-weight:normal;font-style:normal;">14:00</div>
<div class="ab" style="left:1862px;top:632px;width:1px;height:36px;background:#C6C6C6"></div>
<div class="t" style="left:1486.90px;width:800px;text-align:center;top:638.17px;font-size:11.1px;color:#222;font-weight:normal;font-style:normal;">15:00</div>
<div class="ab" style="left:62px;top:670px;width:1841px;height:327px;background:#fff"></div>
<div class="ab" style="left:1413px;top:670px;width:490px;height:327px;background:#F5F5F5"></div>
<div class="ab" style="left:112px;top:669px;width:1px;height:328px;background:#C6C6C6"></div>
<div class="ab" style="left:162px;top:669px;width:1px;height:328px;background:#C6C6C6"></div>
<div class="ab" style="left:212px;top:669px;width:1px;height:328px;background:#C6C6C6"></div>
<div class="ab" style="left:262px;top:669px;width:1px;height:328px;background:#C6C6C6"></div>
<div class="ab" style="left:312px;top:669px;width:1px;height:328px;background:#C6C6C6"></div>
<div class="ab" style="left:362px;top:669px;width:1px;height:328px;background:#C6C6C6"></div>
<div class="ab" style="left:412px;top:669px;width:1px;height:328px;background:#C6C6C6"></div>
<div class="ab" style="left:462px;top:669px;width:1px;height:328px;background:#C6C6C6"></div>
<div class="ab" style="left:512px;top:669px;width:1px;height:328px;background:#C6C6C6"></div>
<div class="ab" style="left:562px;top:669px;width:1px;height:328px;background:#C6C6C6"></div>
<div class="ab" style="left:612px;top:669px;width:1px;height:328px;background:#C6C6C6"></div>
<div class="ab" style="left:662px;top:669px;width:1px;height:328px;background:#C6C6C6"></div>
<div class="ab" style="left:712px;top:669px;width:1px;height:328px;background:#C6C6C6"></div>
<div class="ab" style="left:762px;top:669px;width:1px;height:328px;background:#C6C6C6"></div>
<div class="ab" style="left:812px;top:669px;width:1px;height:328px;background:#C6C6C6"></div>
<div class="ab" style="left:862px;top:669px;width:1px;height:328px;background:#C6C6C6"></div>
<div class="ab" style="left:912px;top:669px;width:1px;height:328px;background:#C6C6C6"></div>
<div class="ab" style="left:962px;top:669px;width:1px;height:328px;background:#C6C6C6"></div>
<div class="ab" style="left:1012px;top:669px;width:1px;height:328px;background:#C6C6C6"></div>
<div class="ab" style="left:1062px;top:669px;width:1px;height:328px;background:#C6C6C6"></div>
<div class="ab" style="left:1112px;top:669px;width:1px;height:328px;background:#C6C6C6"></div>
<div class="ab" style="left:1162px;top:669px;width:1px;height:328px;background:#C6C6C6"></div>
<div class="ab" style="left:1212px;top:669px;width:1px;height:328px;background:#C6C6C6"></div>
<div class="ab" style="left:1262px;top:669px;width:1px;height:328px;background:#C6C6C6"></div>
<div class="ab" style="left:1312px;top:669px;width:1px;height:328px;background:#C6C6C6"></div>
<div class="ab" style="left:1362px;top:669px;width:1px;height:328px;background:#C6C6C6"></div>
<div class="ab" style="left:1412px;top:669px;width:1px;height:328px;background:#C6C6C6"></div>
<div class="ab" style="left:1462px;top:669px;width:1px;height:328px;background:#C6C6C6"></div>
<div class="ab" style="left:1512px;top:669px;width:1px;height:328px;background:#C6C6C6"></div>
<div class="ab" style="left:1562px;top:669px;width:1px;height:328px;background:#C6C6C6"></div>
<div class="ab" style="left:1612px;top:669px;width:1px;height:328px;background:#C6C6C6"></div>
<div class="ab" style="left:1662px;top:669px;width:1px;height:328px;background:#C6C6C6"></div>
<div class="ab" style="left:1712px;top:669px;width:1px;height:328px;background:#C6C6C6"></div>
<div class="ab" style="left:1762px;top:669px;width:1px;height:328px;background:#C6C6C6"></div>
<div class="ab" style="left:1812px;top:669px;width:1px;height:328px;background:#C6C6C6"></div>
<div class="ab" style="left:1862px;top:669px;width:1px;height:328px;background:#C6C6C6"></div>
<div class="ab" style="left:62px;top:710px;width:1841px;height:1px;background:#C6C6C6"></div>
<div class="ab" style="left:62px;top:751px;width:1841px;height:1px;background:#C6C6C6"></div>
<div class="ab" style="left:62px;top:792px;width:1841px;height:1px;background:#C6C6C6"></div>
<div class="ab" style="left:62px;top:833px;width:1841px;height:1px;background:#C6C6C6"></div>
<div class="ab" style="left:62px;top:874px;width:1841px;height:1px;background:#C6C6C6"></div>
<div class="ab" style="left:62px;top:915px;width:1841px;height:1px;background:#C6C6C6"></div>
<div class="ab" style="left:62px;top:956px;width:1841px;height:1px;background:#C6C6C6"></div>
<div class="ab" style="left:62px;top:669px;width:1px;height:328px;background:#C6C6C6"></div>
<div class="ab" style="left:2px;top:669px;width:60px;height:41px;background:#F0A0AB"></div>
<div class="ab" style="left:2px;top:710px;width:60px;height:41px;background:#B8E0F4"></div>
<div class="ab" style="left:2px;top:751px;width:60px;height:41px;background:#F2DF8C"></div>
<div class="ab" style="left:2px;top:792px;width:60px;height:41px;background:#AEDCAE"></div>
<div class="ab" style="left:2px;top:833px;width:60px;height:41px;background:#EDB0D4"></div>
<div class="ab" style="left:2px;top:874px;width:60px;height:41px;background:#9EE2DC"></div>
<div class="ab" style="left:2px;top:915px;width:60px;height:41px;background:#F4C398"></div>
<div class="ab" style="left:2px;top:956px;width:60px;height:41px;background:#D0D0D0"></div>
<div class="ab" style="left:2px;top:669px;width:60px;height:1px;background:#C8C8C8"></div>
<div class="ab" style="left:2px;top:710px;width:60px;height:1px;background:#D88A95"></div>
<div class="ab" style="left:2px;top:751px;width:60px;height:1px;background:#9CC8DC"></div>
<div class="ab" style="left:2px;top:792px;width:60px;height:1px;background:#D8C470"></div>
<div class="ab" style="left:2px;top:833px;width:60px;height:1px;background:#90C090"></div>
<div class="ab" style="left:2px;top:874px;width:60px;height:1px;background:#D090B8"></div>
<div class="ab" style="left:2px;top:915px;width:60px;height:1px;background:#74BCB6"></div>
<div class="ab" style="left:2px;top:956px;width:60px;height:1px;background:#D8A070"></div>
<div class="ab" style="left:63px;top:671px;width:248px;height:39px;background:#F0A0AB;border:1px solid #F2A8B2"></div>
<div class="ab" style="left:64px;top:672px;width:5px;height:37px;background:#fff"></div>
<div class="t" style="left:81.50px;top:678.12px;font-size:21.5px;color:#1A1A1A;font-weight:normal;font-style:normal;letter-spacing:0.75px">OF: 00000005</div>
<div class="ab" style="left:264px;top:876px;width:298px;height:39px;background:#9EE2DC;border:1px solid #A4E4DE"></div>
<div class="ab" style="left:265px;top:877px;width:5px;height:37px;background:#fff"></div>
<div class="t" style="left:298.70px;top:883.12px;font-size:21.5px;color:#1A1A1A;font-weight:normal;font-style:normal;letter-spacing:0.75px">OF: 00000005</div>
<div class="ab" style="left:514px;top:917px;width:97px;height:39px;background:#F4C398;border:1px solid #F4C8A0"></div>
<div class="ab" style="left:515px;top:918px;width:5px;height:37px;background:#fff"></div>
<div class="t" style="left:527.00px;top:924.12px;font-size:21.5px;color:#1A1A1A;font-weight:normal;font-style:normal;letter-spacing:0.75px">OF: 0<span style="letter-spacing:-0.5px">...</span></div>
<div class="ab" style="left:764px;top:917px;width:348px;height:39px;background:#F4C398;border:1px solid #F4C8A0"></div>
<div class="ab" style="left:765px;top:918px;width:5px;height:37px;background:#fff"></div>
<div class="t" style="left:805.60px;top:924.12px;font-size:21.5px;color:#1A1A1A;font-weight:normal;font-style:normal;letter-spacing:0.75px">OF: 00000005</div>
<div class="ab" style="left:1064px;top:958px;width:247px;height:38px;background:#D0D0D0;border:1px solid #C4C4C4"></div>
<div class="ab" style="left:1065px;top:959px;width:5px;height:36px;background:#fff"></div>
<div class="t" style="left:1084.00px;top:965.12px;font-size:21.5px;color:#1A1A1A;font-weight:normal;font-style:normal;letter-spacing:0.75px">OF: 00000005</div>
<div class="ab" style="left:1463px;top:958px;width:398px;height:38px;background:#D0D0D0;border:1px solid #C4C4C4"></div>
<div class="ab" style="left:1464px;top:959px;width:5px;height:36px;background:#fff"></div>
<div class="t" style="left:1507.00px;top:965.12px;font-size:21.5px;color:#1A1A1A;font-weight:normal;font-style:normal;letter-spacing:0.75px">OF: 00000005</div>
<div class="ab" style="left:512px;top:792px;width:50px;height:41px;background:#DCE8F8;border-left:1px solid #C6C6C6"></div>
<svg class="ab" style="left:61px;top:716px" width="19" height="31" viewBox="0 0 19 31"><path d="M0.5 0.5 L8.5 0.5 A9 9 0 0 1 17.5 9.5 L17.5 20.5 A9 9 0 0 1 8.5 29.5 L0.5 29.5 Z" fill="#C8F0FE" stroke="#90C8E0" stroke-width="1"/><path d="M10.5 11 L6.5 15 L10.5 19" fill="none" stroke="#222" stroke-width="1.5"/></svg>
<svg class="ab" style="left:61px;top:757px" width="19" height="31" viewBox="0 0 19 31"><path d="M0.5 0.5 L8.5 0.5 A9 9 0 0 1 17.5 9.5 L17.5 20.5 A9 9 0 0 1 8.5 29.5 L0.5 29.5 Z" fill="#FFF09A" stroke="#D8C860" stroke-width="1"/><path d="M10.5 11 L6.5 15 L10.5 19" fill="none" stroke="#222" stroke-width="1.5"/></svg>
<svg class="ab" style="left:61px;top:798px" width="19" height="31" viewBox="0 0 19 31"><path d="M0.5 0.5 L8.5 0.5 A9 9 0 0 1 17.5 9.5 L17.5 20.5 A9 9 0 0 1 8.5 29.5 L0.5 29.5 Z" fill="#BEEEC0" stroke="#88C890" stroke-width="1"/><path d="M10.5 11 L6.5 15 L10.5 19" fill="none" stroke="#222" stroke-width="1.5"/></svg>
<svg class="ab" style="left:61px;top:839px" width="19" height="31" viewBox="0 0 19 31"><path d="M0.5 0.5 L8.5 0.5 A9 9 0 0 1 17.5 9.5 L17.5 20.5 A9 9 0 0 1 8.5 29.5 L0.5 29.5 Z" fill="#FFC0E4" stroke="#D890B8" stroke-width="1"/><path d="M10.5 11 L6.5 15 L10.5 19" fill="none" stroke="#222" stroke-width="1.5"/></svg>
<svg class="ab" style="left:1885px;top:716px" width="19" height="31" viewBox="0 0 19 31"><path d="M18.5 0.5 L10.5 0.5 A9 9 0 0 0 1.5 9.5 L1.5 20.5 A9 9 0 0 0 10.5 29.5 L18.5 29.5 Z" fill="#C8F0FE" stroke="#90C8E0" stroke-width="1"/><path d="M8 11 L12 15 L8 19" fill="none" stroke="#222" stroke-width="1.5"/></svg>
<svg class="ab" style="left:1885px;top:757px" width="19" height="31" viewBox="0 0 19 31"><path d="M18.5 0.5 L10.5 0.5 A9 9 0 0 0 1.5 9.5 L1.5 20.5 A9 9 0 0 0 10.5 29.5 L18.5 29.5 Z" fill="#FFF09A" stroke="#D8C860" stroke-width="1"/><path d="M8 11 L12 15 L8 19" fill="none" stroke="#222" stroke-width="1.5"/></svg>
<svg class="ab" style="left:1885px;top:798px" width="19" height="31" viewBox="0 0 19 31"><path d="M18.5 0.5 L10.5 0.5 A9 9 0 0 0 1.5 9.5 L1.5 20.5 A9 9 0 0 0 10.5 29.5 L18.5 29.5 Z" fill="#BEEEC0" stroke="#88C890" stroke-width="1"/><path d="M8 11 L12 15 L8 19" fill="none" stroke="#222" stroke-width="1.5"/></svg>
<div class="ab" style="left:186px;top:709px;width:232px;height:112px;background:#fff;border:1px solid #767676;border-radius:2px"></div>
<div class="t" style="left:193.00px;top:720.26px;font-size:18.4px;color:#333;font-weight:normal;font-style:normal;">Début: 07:00</div>
<div class="t" style="left:193.00px;top:745.06px;font-size:18.4px;color:#333;font-weight:normal;font-style:normal;">Fin: 11:24</div>
<div class="t" style="left:193.00px;top:769.86px;font-size:18.4px;color:#333;font-weight:normal;font-style:normal;">Vitesse: 0 pièces/heure</div>
<div class="t" style="left:193.00px;top:794.66px;font-size:18.4px;color:#333;font-weight:normal;font-style:normal;">Quantité réalisée: 0 pièces</div>
<div class="ab" style="left:1903px;top:586px;width:1px;height:281px;background:#A8A8A8"></div>
<div class="ab" style="left:1904px;top:585px;width:13px;height:412px;background:#fff"></div>
<div class="ab" style="left:1904px;top:586px;width:13px;height:16px;border-top:1px solid #A8A8A8;border-bottom:2px solid #8A8A8A"></div>
<div class="ab" style="left:1907px;top:591px;width:0;height:0;border-left:4px solid transparent;border-right:4px solid transparent;border-bottom:4px solid #666"></div>
<div class="ab" style="left:1904px;top:851px;width:13px;height:16px;border-top:2px solid #8A8A8A;border-bottom:1px solid #8A8A8A"></div>
<div class="ab" style="left:1907px;top:858px;width:0;height:0;border-left:4px solid transparent;border-right:4px solid transparent;border-top:4px solid #666"></div>
<svg class="ab" style="left:1906px;top:871px" width="11" height="10" viewBox="0 0 11 10"><path d="M2 1 L9 1 M5.5 2 L2.5 5 L8.5 5 Z M5.5 5 L2.5 8 L8.5 8 Z" fill="#9A9A9A" stroke="#9A9A9A" stroke-width="1"/></svg>
<svg class="ab" style="left:1906px;top:887px" width="11" height="10" viewBox="0 0 11 10"><path d="M5.5 1 L2.5 4 L8.5 4 Z M5.5 4.5 L2.5 7.5 L8.5 7.5 Z" fill="#9A9A9A" stroke="#9A9A9A" stroke-width="0"/></svg>
<svg class="ab" style="left:1906px;top:903px" width="11" height="10" viewBox="0 0 11 10"><path d="M5.5 3 L2.5 6 L8.5 6 Z" fill="#9A9A9A" stroke="#9A9A9A" stroke-width="0"/></svg>
<svg class="ab" style="left:1906px;top:918px" width="11" height="10" viewBox="0 0 11 10"><path d="M5.5 6 L2.5 3 L8.5 3 Z" fill="#9A9A9A" stroke="#9A9A9A" stroke-width="0"/></svg>
<svg class="ab" style="left:1906px;top:934px" width="11" height="10" viewBox="0 0 11 10"><path d="M5.5 4 L2.5 1 L8.5 1 Z M5.5 7.5 L2.5 4.5 L8.5 4.5 Z" fill="#9A9A9A" stroke="#9A9A9A" stroke-width="0"/></svg>
<svg class="ab" style="left:1906px;top:950px" width="11" height="10" viewBox="0 0 11 10"><path d="M5.5 3.5 L2.5 0.5 L8.5 0.5 Z M5.5 6.5 L2.5 3.5 L8.5 3.5 Z M2 8 L9 8" fill="#9A9A9A" stroke="#9A9A9A" stroke-width="1"/></svg>
<svg class="ab" style="left:1906px;top:967px" width="11" height="10" viewBox="0 0 11 10"><path d="M1.5 5 L9.5 5 M5.5 1 L5.5 9" fill="#6E6E6E" stroke="#6E6E6E" stroke-width="1.6"/></svg>
<svg class="ab" style="left:1906px;top:983px" width="11" height="10" viewBox="0 0 11 10"><path d="M1.5 5 L9.5 5" fill="#6E6E6E" stroke="#6E6E6E" stroke-width="1.6"/></svg>
<div class="ab" style="left:2px;top:997px;width:1915px;height:14px;background:#EFEFEF"></div>
<div class="ab" style="left:3px;top:998px;width:16px;height:13px;background:#fff;border:1px solid #8A8A8A;border-bottom:none"></div>
<div class="ab" style="left:8px;top:1001px;width:0;height:0;border-top:4px solid transparent;border-bottom:4px solid transparent;border-right:4px solid #666"></div>
<div class="ab" style="left:819px;top:998px;width:266px;height:13px;background:#fff;border:1px solid #8A8A8A;border-bottom:none"></div>
<div class="ab" style="left:1886px;top:998px;width:16px;height:13px;background:#fff;border:1px solid #8A8A8A;border-bottom:none"></div>
<div class="ab" style="left:1893px;top:1001px;width:0;height:0;border-top:4px solid transparent;border-bottom:4px solid transparent;border-left:4px solid #666"></div>
</body></html>
